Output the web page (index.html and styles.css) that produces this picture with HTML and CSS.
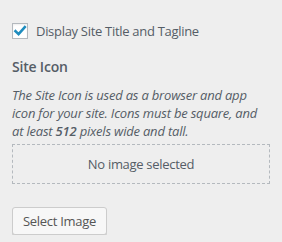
FILE: index.html
```html
<!DOCTYPE html>
<html>
<head>
<meta charset="utf-8">
<link rel="stylesheet" href="styles.css">
</head>
<body>
<div class="panel">
  <label class="check-row">
    <span class="checkbox">
      <svg width="16" height="16" viewBox="0 0 16 16"><path d="M3.5 8.2 L6.6 11.2 L12.8 4.2" fill="none" stroke="#1e8cbe" stroke-width="2.6" stroke-linecap="square"/></svg>
    </span>
    <span class="check-label">Display Site Title and Tagline</span>
  </label>
  <div class="control">
    <div class="control-title">Site Icon</div>
    <div class="description">The Site Icon is used as a browser and app icon for your site. Icons must be square, and at least <strong>512</strong> pixels wide and tall.</div>
    <div class="placeholder">No image selected</div>
    <button class="button">Select Image</button>
  </div>
</div>
</body>
</html>
```
FILE: styles.css
```css
html, body {
  margin: 0;
  background: #eeeeee;
}
body {
  font-family: "Open Sans", "Noto Sans", sans-serif;
  color: #555d66;
}
.panel {
  padding: 22px 12px 0 12px;
}
.check-row {
  display: flex;
  align-items: center;
  gap: 8px;
}
.checkbox {
  width: 16px;
  height: 16px;
  box-sizing: border-box;
  border: 1px solid #b4b9be;
  background: #fff;
  box-shadow: inset 0 1px 2px rgba(0,0,0,0.07);
  display: flex;
  align-items: center;
  justify-content: center;
  position: relative;
}
.checkbox svg {
  position: absolute;
  left: -1px;
  top: -1px;
}
.check-label {
  font-size: 13px;
  color: #555d66;
  letter-spacing: -0.3px;
}
.control {
  margin-top: 16px;
}
.control-title {
  font-size: 14px;
  font-weight: 600;
  line-height: 22px;
  color: #555d66;
  letter-spacing: -0.2px;
}
.description {
  font-size: 13px;
  font-style: italic;
  line-height: 18px;
  margin-top: 8px;
  color: #555d66;
  letter-spacing: -0.2px;
}
.description strong {
  font-weight: 600;
}
.placeholder {
  margin-top: 4px;
  height: 40px;
  box-sizing: border-box;
  border: 1px dashed #b4b9be;
  display: flex;
  align-items: center;
  justify-content: center;
  font-size: 13px;
  color: #555d66;
  letter-spacing: -0.3px;
}
.button {
  margin-top: 23px;
  height: 28px;
  box-sizing: border-box;
  padding: 0 10px;
  font-family: inherit;
  font-size: 13px;
  line-height: 26px;
  color: #555;
  background: #f7f7f7;
  border: 1px solid #cccccc;
  border-radius: 3px;
  box-shadow: 0 1px 0 #cccccc;
  letter-spacing: -0.3px;
}
```
